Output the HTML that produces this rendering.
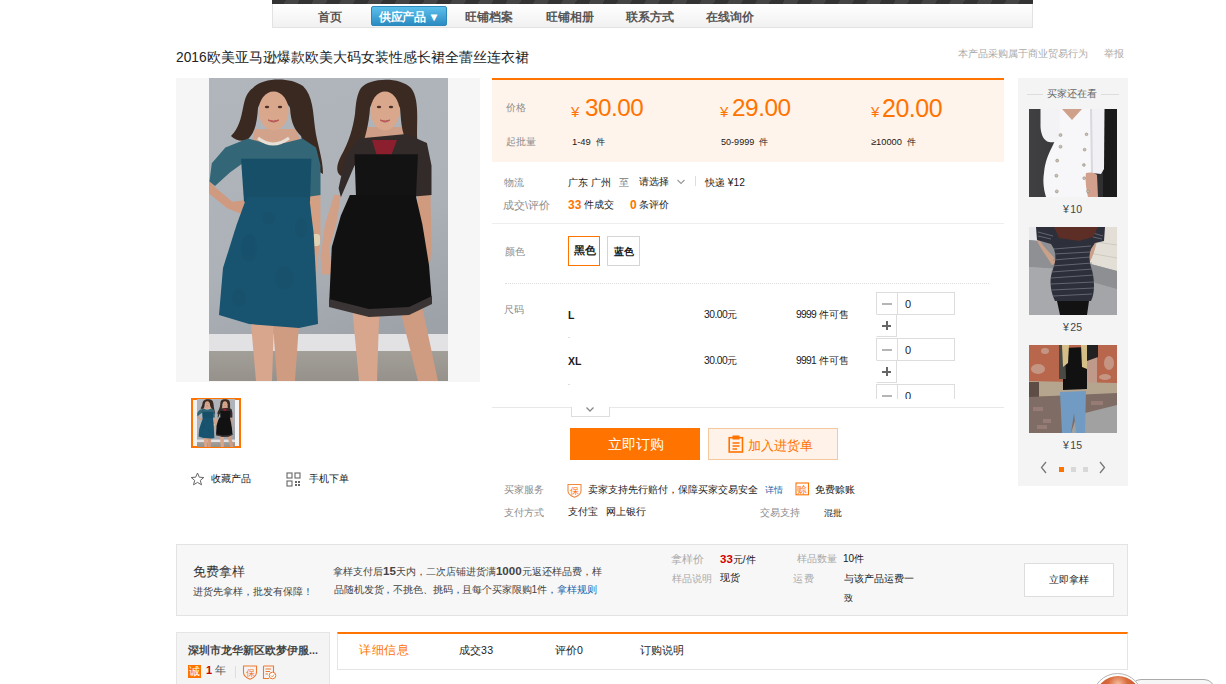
<!DOCTYPE html>
<html><head><meta charset="utf-8">
<style>
*{margin:0;padding:0;box-sizing:border-box}
html,body{width:1226px;height:684px;overflow:hidden;background:#fff}
body{position:relative;font-family:"Liberation Sans",sans-serif;font-size:12px;color:#1a1a1a}
.a{position:absolute;white-space:nowrap;line-height:1}
.g{color:#8c8c8c}
.o{color:#ff7300}
/* nav */
#strip{left:272px;top:0;width:761px;height:4px;background:repeating-linear-gradient(120deg,#333 0 12px,#444 12px 24px)}
#nav{left:272px;top:4px;width:761px;height:24px;background:linear-gradient(#fff,#f1f1f1);border:1px solid #e2e2e2;border-top:0}
.ni{top:10.5px;font-weight:bold;color:#555;font-size:11.6px}
#blue{left:371px;top:6px;width:76px;height:20px;border-radius:2px;background:linear-gradient(#5cc0ec,#2b8bc2);border:1px solid #2a88bb}
.pr{font-size:25px;letter-spacing:-0.5px}
.qty{position:absolute;left:384px;width:79px;height:46px}
.mn{position:absolute;left:0;top:0;width:22px;height:23px;border:1px solid #ddd;background:#fff}
.mn:after{content:"";position:absolute;left:5px;top:10px;width:10px;height:1.5px;background:#b5b5b5}
.ip{position:absolute;left:21px;top:0;width:58px;height:23px;border:1px solid #ddd;background:#fff;font-size:11px;padding:6px 0 0 7px;line-height:1;color:#222}
.pl{position:absolute;left:0;top:22px;width:21px;height:23px;border:1px solid #ddd;border-left-color:#fff;background:#fff}
.pl:before{content:"";position:absolute;left:5px;top:10px;width:9px;height:1.5px;background:#666}
.pl:after{content:"";position:absolute;left:9px;top:6px;width:1.5px;height:9px;background:#666}
.bn{font-size:11.6px}
</style></head><body>

<div class="a" id="strip"></div>
<div class="a" id="nav"></div>
<div class="a ni" style="left:318px">首页</div>
<div class="a" id="blue"></div>
<div class="a ni" style="left:379px;color:#fff;letter-spacing:-0.4px">供应产品 ▼</div>
<div class="a ni" style="left:465px">旺铺档案</div>
<div class="a ni" style="left:546px">旺铺相册</div>
<div class="a ni" style="left:626px">联系方式</div>
<div class="a ni" style="left:706px">在线询价</div>

<!-- title -->
<div class="a" style="left: 176px; top: 51px; font-size: 13.74px; color: rgb(34, 34, 34);">2016欧美亚马逊爆款欧美大码女装性感长裙全蕾丝连衣裙</div>
<div class="a g" style="left:958px;top:49px;font-size:10px;color:#aaa">本产品采购属于商业贸易行为</div>
<div class="a g" style="left:1104px;top:49px;font-size:10px;color:#aaa">举报</div>

<!-- image area -->
<div class="a" style="left:176px;top:78px;width:304px;height:304px;background:#f6f6f6"></div>
<svg class="a" style="left:209px;top:78px" width="239" height="303" viewBox="0 0 239 303"><g id="ph">
<defs>
<linearGradient id="bgG" x1="0" y1="0" x2="0.3" y2="1"><stop offset="0" stop-color="#b0b6bb"/><stop offset=".6" stop-color="#adb2b8"/><stop offset="1" stop-color="#9da2a8"/></linearGradient>
<linearGradient id="flG" x1="0" y1="0" x2="0" y2="1"><stop offset="0" stop-color="#a29e98"/><stop offset="1" stop-color="#96918b"/></linearGradient>
</defs>
<rect width="239" height="303" fill="url(#bgG)"/>
<rect y="256" width="239" height="17" fill="#e2e2e5"/>
<rect y="273" width="239" height="30" fill="url(#flG)"/>
<!-- woman 1 -->
<path d="M0.5,103.4 L7.3,110.2 L23.2,123.8 L41.3,121.5 L54.9,119.3 L52.6,130.6 L36.8,137.4 L18.6,130.6 L-1,114.8 Z" fill="#cf9a80"/>
<path d="M101,117 L111.5,117 L111.5,160 L107,196.3 L91.1,196.3 L88.8,178.2 L99.3,160 Z" fill="#d4a084"/>
<rect x="97" y="156" width="14" height="12" rx="3" fill="#e0d3b4"/>
<path d="M42,246 L65,246 L63,303 L47,303 Z" fill="#d8a68c"/>
<path d="M64,246 L90,246 L86,303 L68,303 Z" fill="#cf9c82"/>
<path d="M46,51 L86.6,51 L96,74 L40,76 Z" fill="#d3a28a"/>
<path d="M44,10 C52,0 80,-2 94,8 C104,18 104,34 106,50 C108,66 114,80 114,96 C106,92 100,84 96,72 L92,58 C86,52 82,46 81,30 C78,20 52,18 49,30 C48,44 46,56 38,62 C32,64 26,62 22,58 C30,50 32,40 34,30 C36,20 38,14 44,10 Z" fill="#3a2921"/>
<ellipse cx="64.6" cy="33" rx="15" ry="19.5" fill="#d9a78c"/><g fill="#4a3028"><ellipse cx="58" cy="29" rx="2.2" ry="1.2"/><ellipse cx="71" cy="29" rx="2.2" ry="1.2"/></g><path d="M59,42 Q64.6,46 70,42 Q64.6,44 59,42Z" fill="#b85a5a" stroke="#b85a5a" stroke-width="1"/>
<path d="M39,60.4 L54.9,64.9 L75.3,64.9 L93.4,60.4 L107,69.5 L111.5,87.6 L111.5,117 L101,118.4 L101,96.6 L36.8,83 L20.9,94.4 L6,108 L0.5,103.4 L2.8,85.3 L16.4,69.5 Z" fill="#336676"/>
<path d="M32,80.8 L102.4,80.8 L101,123.8 L35,123.8 Z" fill="#174f68"/>
<path d="M37.7,119.3 L100.2,119.3 L104.7,155.5 L107,200 L109,246 L90,250 L40,246 L10,237 L14,190 L27.7,146.5 Z" fill="#185370"/>
<g fill="#164b60" opacity=".22"><ellipse cx="40" cy="170" rx="8" ry="14"/><ellipse cx="75" cy="200" rx="9" ry="12"/><ellipse cx="30" cy="220" rx="7" ry="9"/><ellipse cx="92" cy="150" rx="6" ry="10"/><ellipse cx="60" cy="140" rx="7" ry="6"/></g>
<path d="M49,60 Q64,72 80,60" stroke="#e6e0d6" stroke-width="3" fill="none"/>
<!-- woman 2 -->
<path d="M131.9,117 L127.3,146.5 L120.5,169 L122.8,196.3 L112.8,196.3 L111.5,178.2 L116,146.5 L125.1,117 Z" fill="#d2a086"/>
<path d="M208.9,117 L221.5,117 L222.5,169 L220.2,194 L206.6,191.7 L208.9,169 Z" fill="#cf9a7e"/>
<path d="M143.2,230 L170.4,230 L168,303 L150,303 Z" fill="#d8a68c"/>
<path d="M190.7,230 L213.4,230 L229,303 L209,303 Z" fill="#cf9c82"/>
<path d="M156.8,49 L197.5,49 L204,80 L150,80 Z" fill="#cf9e86"/>
<path d="M152,10 C160,0 190,-2 202,10 C210,20 208,40 208,56 C208,68 212,76 210,82 C204,78 198,70 196,60 C192,50 192,40 191,30 C188,20 164,18 161,30 C160,46 156,60 152,72 C148,84 140,94 132,98 C126,94 128,86 132,78 C140,64 144,50 146,36 C147,24 148,16 152,10 Z" fill="#3b2a22"/>
<ellipse cx="176" cy="33" rx="14.5" ry="19.5" fill="#d9a78c"/><g fill="#4a3028"><ellipse cx="170" cy="29" rx="2.2" ry="1.2"/><ellipse cx="182" cy="29" rx="2.2" ry="1.2"/></g><path d="M171,42 Q176,46 181,42 Q176,44 171,42Z" fill="#b85a5a" stroke="#b85a5a" stroke-width="1"/>
<path d="M150,60.4 L197.5,55.9 L217.9,64.9 L222.5,87.6 L222.5,117 L205.2,118.4 L204.3,87.6 L145.5,87.6 L131.9,119.3 L129.6,110.2 L136.4,78.5 Z" fill="#332a2a"/>
<path d="M163,62 L188,62 L182,78 L168,78 Z" fill="#8c1f2e"/>
<path d="M145.5,76.3 L208.9,76.3 L207,119.3 L147,119.3 Z" fill="#141314"/>
<path d="M140.9,117 L206.6,117 L213.4,146.5 L220,187 L223,225 L200,236 L160,238 L120,228 L122.8,169 L131.9,137.4 Z" fill="#121112"/>
<path d="M120,221 L160,231 L200,229 L223,218 L223,226 L200,237 L160,239 L120,229 Z" fill="#3a3434"/>
</g></svg>


<!-- thumb -->
<div class="a" style="left:191px;top:398px;width:50px;height:50px;border:2px solid #ff7300;background:#f2f2f2"></div>
<svg class="a" style="left:197px;top:399px" width="38" height="48" viewBox="0 0 239 303" preserveAspectRatio="none"><use href="#ph"/></svg>

<!-- toolbar -->
<div class="a" style="left: 211px; top: 474px; font-size: 9.67px;">收藏产品</div>
<div class="a" style="left: 309px; top: 474px; font-size: 9.92px;">手机下单</div>

<!-- price box -->
<div class="a" style="left:492px;top:78px;width:512px;height:84px;background:#fff4eb;border-top:2px solid #ff7300"></div>
<div class="a g" style="left: 506px; top: 103px; font-size: 10.12px;">价格</div>
<div class="a g" style="left:506px;top:137px;font-size:10px">起批量</div>
<div class="a o" style="left:571px;top:104px;font-size:15px">¥</div>
<div class="a o pr" style="left: 585px; top: 96px; font-size: 24.28px;">30.00</div>
<div class="a o" style="left:720px;top:104px;font-size:15px">¥</div>
<div class="a o pr" style="left: 732px; top: 96px; font-size: 24.41px;">29.00</div>
<div class="a o" style="left:871px;top:104px;font-size:15px">¥</div>
<div class="a o pr" style="left: 882px; top: 96px;">20.00</div>
<div class="a" style="left: 572px; top: 137px; font-size: 9.41px;">1-49&nbsp; 件</div>
<div class="a" style="left: 721px; top: 138px; font-size: 9.07px;">50-9999&nbsp; 件</div>
<div class="a" style="left: 871px; top: 138px; font-size: 9.31px;">≥10000&nbsp; 件</div>

<!-- logistics -->
<div class="a g" style="left: 504px; top: 178px; font-size: 9.75px;">物流</div>
<div class="a" style="left: 568px; top: 178px; font-size: 10.22px;">广东 广州</div>
<div class="a" style="left:619px;top:178px;font-size:10px;color:#777">至</div>
<div class="a" style="left: 639px; top: 177px; font-size: 9.67px;">请选择</div>

<div class="a" style="left:695px;top:176px;width:1px;height:10px;background:#ddd"></div>
<div class="a" style="left: 705px; top: 178px; font-size: 10.21px;">快递 ¥12</div>
<div class="a g" style="left: 503px; top: 200px; font-size: 10.78px;">成交\评价</div>
<div class="a o" style="left:568px;top:199px;font-weight:bold">33</div>
<div class="a" style="left: 584px; top: 200px; font-size: 9.83px;">件成交</div>
<div class="a o" style="left:630px;top:199px;font-weight:bold">0</div>
<div class="a" style="left: 639px; top: 200px; font-size: 10.15px;">条评价</div>
<div class="a" style="left:492px;top:223px;width:512px;height:1px;background:#eee"></div>

<!-- color -->
<div class="a g" style="left: 505px; top: 247px; font-size: 9.91px;">颜色</div>
<div class="a" style="left:568px;top:236px;width:32px;height:30px;border:1px solid #ff7300"></div>
<div class="a" style="left: 574px; top: 245px; font-weight: bold; font-size: 10.55px;">黑色</div>
<div class="a" style="left:607px;top:236px;width:33px;height:30px;border:1px solid #d5d5d5"></div>
<div class="a" style="left: 614px; top: 247px; font-weight: bold; font-size: 10.25px;">蓝色</div>
<div class="a" style="left:505px;top:283px;width:484px;height:0;border-top:1px dotted #ddd"></div>

<!-- size -->
<div class="a g" style="left: 504px; top: 305px; font-size: 10.23px;">尺码</div>
<div class="a" style="left:492px;top:288px;width:512px;height:111px;overflow:hidden">
 <div class="a" style="left:76px;top:22px;font-weight:bold;font-size:10.5px">L</div>
 <div class="a" style="left:212px;top:22px;font-size:10.3px"><span style="letter-spacing:-0.5px">30.00</span>元</div>
 <div class="a" style="left:304px;top:22px;font-size:10.3px"><span style="letter-spacing:-0.7px">9999</span> 件可售</div>
 <div class="a" style="left:76px;top:49px;width:2px;height:1px;background:#ddd"></div>
 <div class="a" style="left:76px;top:68px;font-weight:bold;font-size:10.5px">XL</div>
 <div class="a" style="left:212px;top:68px;font-size:10.3px"><span style="letter-spacing:-0.5px">30.00</span>元</div>
 <div class="a" style="left:304px;top:68px;font-size:10.3px"><span style="letter-spacing:-0.7px">9991</span> 件可售</div>
 <div class="a" style="left:76px;top:96px;width:2px;height:1px;background:#ddd"></div>
 <div class="qty" style="top:4px"><div class="mn"></div><div class="ip">0</div><div class="pl"></div></div>
 <div class="qty" style="top:50px"><div class="mn"></div><div class="ip">0</div><div class="pl"></div></div>
 <div class="qty" style="top:96px"><div class="mn"></div><div class="ip">0</div><div class="pl"></div></div>
</div>
<div class="a" style="left:492px;top:407px;width:512px;height:1px;background:#e8e8e8"></div>
<div class="a" style="left:571px;top:407px;width:39px;height:10px;border:1px solid #ddd;border-top:0;background:#fff"></div>


<!-- buttons -->
<div class="a" style="left:570px;top:428px;width:130px;height:32px;background:#ff7300"></div>
<div class="a" style="left:608px;top:438px;font-size:13.6px;color:#fff">立即订购</div>
<div class="a" style="left:708px;top:428px;width:130px;height:32px;background:#fff3e9;border:1px solid #f6c89e"></div>
<div class="a" style="left: 748px; top: 439px; font-size: 13px; color: rgb(255, 115, 0);">加入进货单</div>

<!-- services -->
<div class="a g" style="left: 504px; top: 485px; font-size: 10.29px;">买家服务</div>
<div class="a" style="left: 588px; top: 485px; font-size: 10px;">卖家支持先行赔付，保障买家交易安全</div>
<div class="a" style="left: 765px; top: 486px; font-size: 9.2px; color: rgb(30, 95, 168);">详情</div>
<div class="a" style="left: 815px; top: 485px; font-size: 9.7px;">免费赊账</div>
<div class="a g" style="left: 504px; top: 508px; font-size: 10px;">支付方式</div>
<div class="a" style="left:568px;top:507px;font-size:10px">支付宝&nbsp;&nbsp; 网上银行</div>
<div class="a g" style="left: 760px; top: 508px; font-size: 10.39px;">交易支持</div>
<div class="a" style="left: 824px; top: 508px; font-size: 9.45px;">混批</div>

<!-- sample box -->
<div class="a" style="left:176px;top:544px;width:952px;height:72px;background:#f7f7f7;border:1px solid #e3e3e3"></div>
<div class="a" style="left: 193px; top: 565px; font-size: 13px; color: rgb(51, 51, 51);">免费拿样</div>
<div class="a" style="left: 193px; top: 587px; font-size: 9.88px; color: rgb(68, 68, 68);">进货先拿样，批发有保障！</div>
<div class="a" style="left:333px;top:565px;font-size:10.3px;color:#444">拿样支付后<b class="bn">15</b>天内，二次店铺进货满<b class="bn">1000</b>元返还样品费，样</div>
<div class="a" style="left:334px;top:585px;font-size:10.3px;color:#444;letter-spacing:-0.12px">品随机发货，不挑色、挑码，且每个买家限购1件，<span style="color:#1e5fa8">拿样规则</span></div>
<div class="a g" style="left: 671px; top: 554px; font-size: 10.5px; color: rgb(170, 170, 170);">拿样价</div>
<div class="a" style="left:720px;top:554px;font-size:10px"><b style="color:#d40000;font-size:11.5px">33</b>元/件</div>
<div class="a g" style="left: 672px; top: 574px; font-size: 10px; color: rgb(170, 170, 170);">样品说明</div>
<div class="a" style="left:720px;top:573px;font-size:10px">现货</div>
<div class="a g" style="left: 797px; top: 554px; font-size: 10px; color: rgb(170, 170, 170);">样品数量</div>
<div class="a" style="left: 843px; top: 554px; font-size: 10px;">10件</div>
<div class="a g" style="left:793px;top:574px;font-size:10.3px;color:#aaa;letter-spacing:1.4px">运费</div>
<div class="a" style="left: 844px; top: 574px; font-size: 10px;">与该产品运费一</div>
<div class="a" style="left: 844px; top: 594px; font-size: 8.6px;">致</div>
<div class="a" style="left:1024px;top:563px;width:90px;height:34px;background:#fff;border:1px solid #ddd"></div>
<div class="a" style="left:1049px;top:575px;font-size:10px">立即拿样</div>

<!-- company -->
<div class="a" style="left:176px;top:632px;width:154px;height:60px;background:#f4f4f4;border:1px solid #e5e5e5"></div>
<div class="a" style="left: 188px; top: 645px; font-size: 10.63px; font-weight: bold; color: rgb(68, 68, 68);">深圳市龙华新区欧梦伊服...</div>

<div class="a" style="left:206px;top:665px;font-weight:bold;color:#c00;font-size:11px">1</div>
<div class="a" style="left:215px;top:665px;font-size:11px;color:#555">年</div>
<div class="a" style="left:235px;top:666px;width:1px;height:12px;background:#ddd"></div>


<!-- company icons -->
<div class="a" style="left:188px;top:665px;width:13px;height:13px;background:#ff7300;color:#fff;font-size:11px;line-height:13px;text-align:center">诚</div>
<svg class="a" style="left:242px;top:665px" width="16" height="15" viewBox="0 0 16 15">
<path d="M1.5,1 H14.5 V7.5 C14.5,10.5 11.5,12.8 8,14.2 C4.5,12.8 1.5,10.5 1.5,7.5 Z" fill="none" stroke="#f07830" stroke-width="1.1"/>
<text x="8" y="10.5" font-size="9" text-anchor="middle" fill="#f07830">保</text>
</svg>
<svg class="a" style="left:262px;top:665px" width="15" height="15" viewBox="0 0 15 15">
<path d="M1.5,1 H11.5 V7 M7,13.5 H1.5 V1" fill="none" stroke="#f07830" stroke-width="1.1"/>
<path d="M3.5,4 H9 M3.5,6.5 H8 M3.5,9 H6" stroke="#f07830" stroke-width="1"/>
<circle cx="10.5" cy="10.5" r="3.3" fill="#fff" stroke="#f07830" stroke-width="1"/>
<path d="M8.9,10.5 L10.2,11.8 L12.2,9.5" fill="none" stroke="#f07830" stroke-width="0.9"/>
</svg>
<!-- float bubble -->
<div class="a" style="left:1130px;top:679px;width:85px;height:22px;border:1px solid #aaa;border-radius:11px;background:#f6f6f6"></div>
<div class="a" style="left:1092px;top:673px;width:51px;height:51px;border-radius:50%;background:#fff;border:1px solid #b5b5b5"></div>
<div class="a" style="left:1095px;top:676px;width:46px;height:46px;border-radius:50%;background:radial-gradient(circle at 50% 18%,#f6c0a0 0,#d86a3c 22%,#b84a20 60%)"></div>
<!-- tabs -->
<div class="a" style="left:337px;top:632px;width:791px;height:38px;background:#fff;border:1px solid #e5e5e5;border-top:2px solid #ff7300"></div>
<div class="a o" style="left:359px;top:644px;font-size:12.2px;letter-spacing:0.6px">详细信息</div>
<div class="a" style="left:459px;top:645px;font-size:10.6px">成交<span style="letter-spacing:0.3px">33</span></div>
<div class="a" style="left:555px;top:645px;font-size:10.6px">评价0</div>
<div class="a" style="left: 640px; top: 645px; font-size: 10.64px;">订购说明</div>

<!-- sidebar -->
<div class="a" style="left:1018px;top:78px;width:110px;height:408px;background:#f4f4f4"></div>


<!-- icons -->
<svg class="a" style="left:728px;top:435px" width="16" height="18" viewBox="0 0 16 18">
<rect x="1.2" y="2.7" width="13.3" height="14.3" fill="none" stroke="#ff7300" stroke-width="1.6"></rect>
<rect x="4.5" y="0.5" width="7" height="4" fill="#ff7300"></rect>
<path d="M4.5,8 H11.5 M4.5,11 H11.5 M4.5,14 H9" stroke="#ff7300" stroke-width="1.3"></path>
</svg>
<svg class="a" style="left:567px;top:483px" width="15" height="15" viewBox="0 0 15 15">
<path d="M1,1.5 H14 V8 C14,11 11,13 7.5,14.3 C4,13 1,11 1,8 Z" fill="#fff" stroke="#f08a40" stroke-width="1.1"></path>
<text x="7.5" y="10.8" font-size="9" text-anchor="middle" fill="#ff7300">保</text>
</svg>
<svg class="a" style="left:795px;top:482px" width="15" height="14" viewBox="0 0 15 14">
<rect x="1" y="1" width="12.5" height="11.8" fill="#fff" stroke="#ff7300" stroke-width="1.1"></rect>
<text x="7.2" y="10.6" font-size="10" text-anchor="middle" fill="#ff7300">赊</text>
</svg>
<svg class="a" style="left:190px;top:472px" width="15" height="14" viewBox="0 0 15 14">
<path d="M7.5,1 L9.3,5.2 L13.8,5.5 L10.3,8.4 L11.5,12.8 L7.5,10.4 L3.5,12.8 L4.7,8.4 L1.2,5.5 L5.7,5.2 Z" fill="none" stroke="#666" stroke-width="1"></path>
</svg>
<svg class="a" style="left:286px;top:472px" width="15" height="15" viewBox="0 0 15 15">
<g fill="none" stroke="#666" stroke-width="1.1"><rect x="1" y="1" width="5" height="5"></rect><rect x="9" y="1" width="5" height="5"></rect><rect x="1" y="9" width="5" height="5"></rect></g>
<g fill="#666"><rect x="9" y="9" width="2" height="2"></rect><rect x="12" y="9" width="2" height="2"></rect><rect x="9" y="12" width="2" height="2"></rect><rect x="12" y="12" width="2" height="2"></rect></g>
</svg>
<svg class="a" style="left:584px;top:405px" width="12" height="8" viewBox="0 0 12 8">
<path d="M2.5,2.5 L6,6 L9.5,2.5" fill="none" stroke="#888" stroke-width="1.3"></path>
</svg>
<svg class="a" style="left:676px;top:178px" width="10" height="8" viewBox="0 0 10 8">
<path d="M1.5,2 L5,5.5 L8.5,2" fill="none" stroke="#999" stroke-width="1.1"></path>
</svg>
<!-- sidebar content -->
<div class="a" style="left: 1047px; top: 89px; font-size: 9.55px; color: rgb(102, 102, 102);">买家还在看</div>
<div class="a" style="left:1027px;top:94px;width:16px;height:1px;background:#ddd"></div>
<div class="a" style="left:1101px;top:94px;width:18px;height:1px;background:#ddd"></div>
<svg class="a" style="left:1029px;top:109px" width="88" height="88" viewBox="0 0 88 88">
<defs><linearGradient id="t1g" x1="0" x2="1"><stop offset="0" stop-color="#404042"/><stop offset="1" stop-color="#2c2c2e"/></linearGradient></defs>
<rect width="88" height="88" fill="url(#t1g)"/>
<rect x="74" width="14" height="88" fill="#1a1a1a"/>
<path d="M29,0 L62,0 L63,30 L64,88 L17,88 C14,78 14,70 15,64 C16,52 20,44 24,36 C27,30 29,24 29,20 Z" fill="#f7f7fa"/>
<path d="M11.5,0 L31,0 L30,28 C29,33 25,34 20,33 C15,32 12,26 11.5,18 Z" fill="#f3f3f6"/>
<path d="M61,0 L75.5,0 L75,60 L72,65 L63,64 Z" fill="#f1f1f5"/>
<path d="M61,0 L63,0 L64,64 L62,64 Z" fill="#d8d8de"/>
<path d="M33,0 L53,0 L43,11 Z" fill="#cfa08a"/>
<path d="M57,64 C60,63 66,63 68,66 L69,88 L59,88 C57,80 56,70 57,64 Z" fill="#d2a08c"/>
<g fill="#c8c0b0" stroke="#8a8274" stroke-width="0.5"><circle cx="31.5" cy="26" r="1.5"/><circle cx="31.5" cy="37.7" r="1.5"/><circle cx="28.2" cy="51.6" r="1.5"/><circle cx="27.4" cy="66.7" r="1.5"/><circle cx="27.8" cy="82.4" r="1.5"/><circle cx="57.5" cy="25.3" r="1.4"/><circle cx="55.6" cy="40.7" r="1.4"/><circle cx="54.9" cy="56" r="1.4"/><circle cx="55.2" cy="69.2" r="1.4"/><circle cx="59" cy="82.4" r="1.4"/></g>
</svg>
<div class="a" style="left:1063px;top:204px;font-size:10.5px;color:#444">¥<span style="margin-left:1.5px">10</span></div>
<svg class="a" style="left:1029px;top:227px" width="88" height="88" viewBox="0 0 88 88">
<rect width="88" height="88" fill="#a3a5a8"/>
<path d="M0,0 L30,0 L30,16 L0,13 Z" fill="#e6e7ea"/>
<path d="M0,13 L30,16 L30,42 L0,40 Z" fill="#8e9093"/>
<path d="M0,40 L30,42 L30,88 L0,88 Z" fill="#a8a9ac"/>
<path d="M58,0 L88,0 L88,44 L58,36 Z" fill="#e3dfd7"/>
<path d="M60,14 L88,18 M60,26 L88,31" stroke="#c9c4bb" stroke-width="0.8"/>
<path d="M58,36 L88,44 L88,62 L60,54 Z" fill="#8d8f92"/>
<path d="M10,12 C14,20 22,26 26,32 L28,36 L23,38 C18,30 12,22 8,14 Z" fill="#c9a08a"/>
<path d="M68,14 C66,22 64,30 60,36 L58,36 L61,22 Z" fill="#c9a08a"/>
<path d="M7,0 L76,0 L75,14 L66,16 L62,22 C60,28 60,32 62,40 C66,52 66,66 62,74 L26,74 C21,64 20,52 24,42 C27,34 27,28 25,22 L22,17 L8,13 Z" fill="#2d2f3b"/>
<g stroke="#7e808c" stroke-width="0.8" opacity=".85"><path d="M25,22 L62,19 M25,27 L61,25 M24,33 L61,30 M23,39 L63,36 M22,45 L64,42 M22,51 L65,48 M22,57 L65,55 M23,63 L65,61 M24,69 L63,67 M9,5 L24,9 M9,9 L22,12 M64,6 L74,9 M64,10 L73,12"/></g>
<path d="M25,0 L69,0 L64,10 L50,14 L30,11 Z" fill="#5d2e26"/>
<path d="M28,74 L60,74 L58,88 L31,88 Z" fill="#121212"/>
</svg>
<div class="a" style="left:1063px;top:322px;font-size:10.5px;color:#444">¥<span style="margin-left:1.5px">25</span></div>
<svg class="a" style="left:1029px;top:345px" width="88" height="88" viewBox="0 0 88 88">
<rect width="88" height="88" fill="#b8674c"/>
<g fill="#caa597" opacity=".75"><ellipse cx="9" cy="24" rx="7" ry="5"/><ellipse cx="80" cy="18" rx="5" ry="7"/><ellipse cx="16" cy="6" rx="4" ry="3"/><ellipse cx="76" cy="32" rx="6" ry="3"/></g>
<rect x="58" y="12" width="10" height="28" fill="#bf9a8a"/>
<path d="M0,36 L88,38 L88,50 L0,52 Z" fill="#b5a48e"/>
<rect x="0" y="37" width="10" height="17" fill="#5d4d44"/>
<path d="M0,52 L88,48 L88,88 L0,88 Z" fill="#7f6c64"/>
<g fill="#9c8078" opacity=".8"><rect x="4" y="62" width="10" height="4"/><rect x="14" y="74" width="8" height="4"/><rect x="62" y="56" width="12" height="4"/><rect x="8" y="80" width="10" height="4"/></g>
<path d="M48,70 L88,60 L88,88 L42,88 Z" fill="#a2a1a1"/>
<path d="M34,3 L58,2 L58,44 L34,45 Z" fill="#111"/>
<path d="M30,0 L36,0 L37,34 L30,34 Z" fill="#4a4a44"/>
<path d="M56,0 L69,0 L69,12 L58,16 Z" fill="#222"/>
<path d="M33,0 L40,0 L39,18 L34,22 Z" fill="#d6be88"/>
<path d="M52,0 L58,0 L58,24 L53,22 Z" fill="#d6be88"/>
<path d="M31,47 L57,46 L56,88 L47,88 L45,68 L42,88 L33,88 Z" fill="#729bc4"/>
</svg>
<div class="a" style="left:1063px;top:440px;font-size:10.5px;color:#444">¥<span style="margin-left:1.5px">15</span></div>
<svg class="a" style="left:1040px;top:461px" width="68" height="14" viewBox="0 0 68 14">
<path d="M6,1 L1.5,6.5 L6,12" stroke="#777" stroke-width="1.3" fill="none"></path>
<rect x="19" y="6" width="5" height="5" fill="#ff7300"></rect>
<rect x="31" y="6" width="5" height="5" fill="#d8d8d8"></rect>
<rect x="43" y="6" width="5" height="5" fill="#d8d8d8"></rect>
<path d="M60,1 L64.5,6.5 L60,12" stroke="#777" stroke-width="1.3" fill="none"></path>
</svg>

</body></html>
